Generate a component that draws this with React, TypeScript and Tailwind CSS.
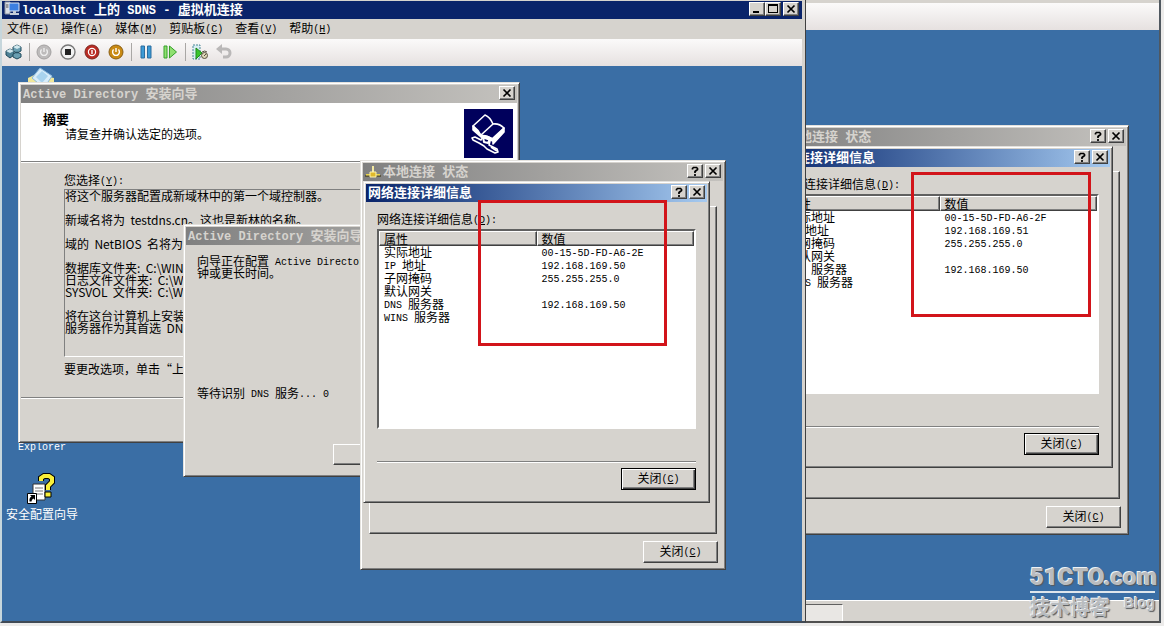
import type { ReactNode } from "react";

const face = "bg-[#d6d3ce] border border-t-[#e4e2de] border-l-[#e4e2de] border-r-[#404040] border-b-[#404040] shadow-[inset_1px_1px_0_#fff,inset_-1px_-1px_0_#808080]";
const raised = "bg-[#d6d3ce] border border-t-white border-l-white border-r-[#404040] border-b-[#404040] shadow-[inset_-1px_-1px_0_#808080]";

// latin runs use the mono font at half the width of a chinese glyph, "&" marks the access key
function T({ children, bold }: { children: string; bold?: boolean }) {
  const parts = children.split(/([\x20-\x7e]+)/);
  const size = bold ? "text-[12px]" : "text-[10px] align-[1px]";
  return (
    <span className="whitespace-pre">
      {parts.map((part, i) =>
        i % 2 === 0 ? (
          part
        ) : (
          <span key={i} className={`font-['Liberation_Mono',monospace] leading-[0] ${size}`}>
            {part.split(/(&.)/).map((s, j) => (s[0] === "&" ? <u key={j}>{s.slice(1)}</u> : s))}
          </span>
        )
      )}
    </span>
  );
}

function CaptionButton({ kind }: { kind: "help" | "close" | "min" | "max" }) {
  return (
    <button aria-label={kind} className={`flex h-3.5 w-4 shrink-0 items-center justify-center ${raised}`}>
      <svg width="10" height="10" viewBox="0 0 10 10" fill="none" stroke="#000">
        {kind === "close" && <path d="M1.500 1.500l7 7M8.500 1.500l-7 7" strokeWidth="1.7" />}
        {kind === "help" && <path d="M2.500 3.500V2.500L3.500 1.500H6.500L7.500 2.500V3.500L5 5.500V7M5 8v2" strokeWidth="1.7" />}
        {kind === "min" && <path d="M1 8h6" strokeWidth="2" />}
        {kind === "max" && (
          <>
            <rect x="0.5" y="0.5" width="9" height="8" />
            <path d="M0 1h10" strokeWidth="2" />
          </>
        )}
      </svg>
    </button>
  );
}

function TitleBar({ title, active, icon, help }: { title: string; active?: boolean; icon?: ReactNode; help?: boolean }) {
  const colors = active
    ? "from-[#0a246a] to-[#a6caf0] text-white"
    : "from-[#808080] to-[#c4c2be] text-[#d6d3ce]";
  return (
    <div className={`flex h-[18px] shrink-0 items-center gap-0.5 bg-linear-to-r px-0.5 pb-0.5 text-[13px] font-bold leading-4 ${colors}`}>
      {icon}
      <h2 className="min-w-0 flex-1">
        <T bold>{title}</T>
      </h2>
      {help && <CaptionButton kind="help" />}
      <CaptionButton kind="close" />
    </div>
  );
}

function CloseButton({ primary }: { primary?: boolean }) {
  const edge = primary
    ? "border border-black bg-[#d6d3ce] shadow-[inset_1px_1px_0_#fff,inset_-1px_-1px_0_#404040,inset_-2px_-2px_0_#808080]"
    : raised;
  return (
    <button className={`h-[22px] w-[75px] pb-0.5 ${edge}`}>
      <T>关闭(&C)</T>
    </button>
  );
}

const NetIcon = () => (
  <svg width="16" height="16" viewBox="0 0 16 16">
    <path d="M7 3h2v6H7z" fill="#f4e9a0" />
    <path d="M0 12h16v2H0z" fill="#5a5540" />
    <path d="M1 11h14v1.500H1z" fill="#e8d44c" />
    <path d="M5 9h6v5H5z" fill="#e0b92a" stroke="#fff4b0" />
  </svg>
);

function StatusWindow({ rows, id }: { rows: string[][]; id: string }) {
  return (
    <section className={`relative flex h-[410px] w-[366px] flex-col p-0.5 ${face}`}>
      <TitleBar title="本地连接 状态" icon={<NetIcon />} help />
      <div className={`mx-1.5 mt-[25px] h-[328px] ${raised}`} />
      <div className="mt-[7px] flex justify-end pr-[5px]">
        <CloseButton />
      </div>

      <section className={`absolute left-0.5 top-5 flex h-[322px] w-[347px] flex-col p-0.5 ${face}`}>
        <TitleBar title="网络连接详细信息" active help />
        <div className="flex flex-1 flex-col px-[11px]">
          <p id={id} className="mt-2 h-[19px] leading-[18px]">
            <T>网络连接详细信息(&D):</T>
          </p>
          <div className="h-[200px] border-2 border-b-white border-l-[#606060] border-r-white border-t-[#606060] bg-white">
            <table aria-labelledby={id} className="w-full table-fixed border-separate border-spacing-0 text-left">
              <thead>
                <tr className="h-[15px] leading-3">
                  <th className={`p-0 pl-1 font-normal ${raised}`}>属性</th>
                  <th className={`p-0 pl-1 font-normal ${raised}`}>数值</th>
                </tr>
              </thead>
              <tbody>
                {rows.map(([name, value]) => (
                  <tr key={name} className="h-[13px] leading-3">
                    <td className="p-0 pb-px pl-[5px] align-top"><T>{name}</T></td>
                    <td className="p-0 pb-px pl-[5px] align-top"><T>{value}</T></td>
                  </tr>
                ))}
              </tbody>
            </table>
          </div>
          <hr className="mt-8 border-t border-[#808080] shadow-[0_1px_0_#fff]" />
          <div className="mt-1.5 flex justify-end">
            <CloseButton primary />
          </div>
        </div>
      </section>
    </section>
  );
}

function SummaryWizard() {
  return (
    <section className={`flex h-[361px] w-[502px] flex-col p-0.5 ${face}`}>
      <TitleBar title="Active Directory 安装向导" />
      <header className="flex h-[59px] shrink-0 justify-between border-b border-[#808080] bg-white pl-[22px] pr-1 shadow-[0_1px_0_#fff]">
        <div className="pt-2">
          <h3 className="text-[13px] font-bold leading-[15px]">摘要</h3>
          <p className="pl-[22px] leading-[15px]">请复查并确认选定的选项。</p>
        </div>
        <svg className="mt-1.5" width="49" height="49" viewBox="0 0 49 49" fill="none" stroke="#fff" strokeWidth="1.6" strokeLinejoin="round">
          <path d="M0 0h49v49H0z" fill="#00005c" stroke="none" />
          <path d="M9 17L21 6q5 2 8 9q6-1 11 4L29 31q-5-5-12-4.500q-3-6-8-9.500z" />
          <path d="M29 15L17 26" />
          <path d="M9 17v4l8 7 12 4v-2q-6-4-12-3.500z" fill="#fff" />
          <path d="M29 29l11-10v4L29 35z" fill="#fff" />
          <path d="M8 29l3-1 6 3 2-3 5 1 2 3-1 4 8 4 1 3-3 1-8-4-3-3-5-3-2-1-4-2z" />
          <path d="M19 28l1 5 4 1 2-4M27 38l6 4" strokeWidth="2" />
        </svg>
      </header>
      <div className="flex flex-col pl-[43px] pr-[18px]">
        <label htmlFor="summary" className="mt-2.5 h-[17px] leading-4">
          <T>您选择(&Y):</T>
        </label>
        <textarea
          id="summary"
          readOnly
          wrap="off"
          className="h-[168px] resize-none overflow-hidden border border-b-white border-l-[#808080] border-r-white border-t-[#808080] bg-[#d6d3ce] p-0 leading-3"
          value={`将这个服务器配置成新域林中的第一个域控制器。

新域名将为  testdns.cn。这也是新林的名称。

域的  NetBIOS  名将为

数据库文件夹:  C:\\WIN
日志文件文件夹:  C:\\W
SYSVOL  文件夹:  C:\\WI

将在这台计算机上安装
服务器作为其首选  DNS`}
        />
        <p className="mt-1 h-4 leading-4">要更改选项，单击“上</p>
      </div>
      <hr className="mt-5 border-t border-[#808080] shadow-[0_1px_0_#fff]" />
    </section>
  );
}

function ProgressWizard() {
  return (
    <section className={`flex h-[253px] w-[366px] flex-col p-0.5 ${face}`}>
      <TitleBar title="Active Directory 安装向导" />
      <div className="flex flex-1 flex-col pl-[11px]">
        <p className="mt-2.5 leading-3">
          <T>向导正在配置 Active Director</T>
          <br />
          钟或更长时间。
        </p>
        <p className="mt-[108px] leading-3">
          <T>等待识别 DNS 服务... 0</T>
        </p>
        <button aria-label="取消" className={`ml-[136px] mt-[45px] h-[21px] w-[75px] ${raised}`} />
      </div>
    </section>
  );
}

const menus = ["文件(&F)", "操作(&A)", "媒体(&M)", "剪贴板(&C)", "查看(&V)", "帮助(&H)"];

function Tool({ label, children }: { label: string; children: ReactNode }) {
  return (
    <button aria-label={label} className="flex h-6 w-6 items-center justify-center">
      <svg width="18" height="18" viewBox="0 0 18 18" fill="none">{children}</svg>
    </button>
  );
}

const Separator = () => <span className="flex w-1.5 justify-center"><span className="h-4.5 w-px bg-[#a9a7a5]" /></span>;

const Power = ({ color }: { color: string }) => (
  <path d="M6.600 6.600a3.400 3.400 0 1 0 4.800 0M9 5v4" stroke={color} strokeWidth="1.4" />
);

function Toolbar() {
  return (
    <div className="flex h-[27px] shrink-0 items-center bg-linear-to-b from-[#fbfafa] to-[#e6e1e0] pb-0.5">
      <Tool label="Ctrl+Alt+Del">
        <path d="M1 8l4-2 4 2v4l-4 3-4-3z" fill="#4f8296" stroke="#204a5c" />
        <path d="M8 4l4-2 4 2v4l-4 2-4-2zM8 11l4-2 4 2v3l-4 2-4-2z" fill="#6a9fb2" stroke="#204a5c" />
        <path d="M1 8l4 2 4-2-4-2zM8 4l4 2 4-2-4-2z" fill="#d2e8ee" />
      </Tool>
      <Separator />
      <Tool label="启动">
        <circle cx="9" cy="9" r="7" fill="#bdbbbb" stroke="#a3a1a1" />
        <Power color="#eee" />
      </Tool>
      <Tool label="关闭">
        <circle cx="9" cy="9" r="7" fill="#f2f2f2" stroke="#777" strokeWidth="1.4" />
        <path d="M6 6h6v6H6z" fill="#222" />
      </Tool>
      <Tool label="关机">
        <circle cx="9" cy="9" r="7" fill="#b92a22" stroke="#7c2720" />
        <circle cx="9" cy="9" r="3.6" stroke="#fff" strokeWidth="1.2" />
        <path d="M9 7v4" stroke="#fff" strokeWidth="1.4" />
      </Tool>
      <Tool label="保存">
        <circle cx="9" cy="9" r="7" fill="#c98a12" stroke="#8a5e14" />
        <Power color="#fff" />
      </Tool>
      <Separator />
      <Tool label="暂停">
        <path d="M4 3h3.500v12H4zM10.500 3H14v12h-3.500z" fill="#3d9bd6" stroke="#2b6d9f" />
      </Tool>
      <Tool label="重置">
        <path d="M3 3h3v12H3zM8.500 3l7 6-7 6z" fill="#8fe070" stroke="#36a02a" />
      </Tool>
      <Separator />
      <Tool label="快照">
        <path d="M2 2h7v14H2z" fill="#d7eef3" stroke="#4b8797" strokeDasharray="2 1" />
        <path d="M5 5l6 5-6 6z" fill="#38c42c" stroke="#208a1c" />
        <circle cx="13.5" cy="12.5" r="3" fill="#ddd6b8" stroke="#55503c" />
        <path d="M11 9q3-2 5 0M13 13l2-2" stroke="#55503c" />
      </Tool>
      <Tool label="还原">
        <path d="M6 6h5a3.800 3.800 0 0 1 0 8H8" stroke="#bab8b8" strokeWidth="3" />
        <path d="M1 6l6-5v10z" fill="#bab8b8" />
      </Tool>
    </div>
  );
}

const localRows = [
  ["实际地址", "00-15-5D-FD-A6-2E"],
  ["IP 地址", "192.168.169.50"],
  ["子网掩码", "255.255.255.0"],
  ["默认网关", ""],
  ["DNS 服务器", "192.168.169.50"],
  ["WINS 服务器", ""],
];

const remoteRows = [
  ["实际地址", "00-15-5D-FD-A6-2F"],
  ["IP 地址", "192.168.169.51"],
  ["子网掩码", "255.255.255.0"],
  ["默认网关", ""],
  ["DNS 服务器", "192.168.169.50"],
  ["WINS 服务器", ""],
];

export default function App() {
  return (
    <div className="flex h-screen min-h-[600px] w-full overflow-hidden bg-[#ecebea] pb-[3px] pr-[3px] font-['Noto_Sans_CJK_SC',sans-serif] text-xs text-black">
      <main className="flex w-[806px] shrink-0 flex-col border-b-2 border-l-2 border-r border-b-[#404a55] border-l-[#c6d6dc] border-r-[#404040] bg-[#d6d3ce] pr-[3px] pt-px">
        <div className="flex h-[18px] shrink-0 items-center bg-[#0a246a] pb-0.5 pl-0.5 pr-[3px] text-[13px] font-bold leading-4 text-white">
          <svg className="mr-0.5" width="16" height="16" viewBox="0 0 16 16">
            <path d="M1 1h5v12H1z" fill="#d8dde4" stroke="#8b93a0" />
            <path d="M2 4h3M2 6h3" stroke="#555" />
            <path d="M5 2h10v8H5z" fill="#3c7fe0" stroke="#dbe4f2" />
            <path d="M9 10h3v2H9zM6 12h9v2H6z" fill="#c4ccd8" />
          </svg>
          <h1 className="flex-1"><T bold>localhost 上的 SDNS - 虚拟机连接</T></h1>
          <CaptionButton kind="min" />
          <CaptionButton kind="max" />
          <span className="w-0.5" />
          <CaptionButton kind="close" />
        </div>
        <nav className="flex h-5 shrink-0 items-center gap-3 pb-0.5 pl-[5px]">
          {menus.map((m) => (
            <button key={m}><T>{m}</T></button>
          ))}
        </nav>
        <Toolbar />

        <div className="relative flex-1 overflow-hidden bg-[#3a6ea5] text-black">
          <svg className="absolute left-6 top-0" width="30" height="24" viewBox="0 0 30 24">
            <path d="M2 12l8-4 18 4v12H2z" fill="#f0e79a" />
            <path d="M6 12L14 2l12 8-8 12z" fill="#d9edfa" stroke="#8ab9dc" />
            <path d="M10 11l6-6 6 5-6 7z" fill="#a9d3ee" />
          </svg>
          <span className="absolute left-4 top-[372px] leading-4 text-white"><T>Explorer</T></span>
          <a href="#wizard" className="absolute left-1 top-[406px] flex flex-col items-center text-white">
            <svg width="30" height="33" viewBox="0 0 30 33">
              <path d="M6 12h12v16H6z" fill="#fff" stroke="#333" />
              <path d="M8 16h8M8 19h8M8 22h8" stroke="#777" />
              <path d="M14 9V6l3-2h5l3 2v4l-4 4v4" fill="none" stroke="#000" strokeWidth="6" />
              <path d="M18 20h6v5h-6z" fill="#f8ef3a" stroke="#000" />
              <path d="M14 9V6l3-2h5l3 2v4l-4 4v4" fill="none" stroke="#f8ef3a" strokeWidth="4" />
              <path d="M.5 21.500h9v10h-9z" fill="#fff" stroke="#000" />
              <path d="M2.500 29.500q-.5-4 2-5l-1.500-1.500h5v5l-1.500-1.500q-2 1-2 3z" fill="#000" />
            </svg>
            <span className="leading-[18px]">安全配置向导</span>
          </a>

          <div className="absolute left-4 top-4"><SummaryWizard /></div>
          <div className="absolute left-[181px] top-[158px]"><ProgressWizard /></div>
          <div className="absolute left-[358px] top-[94px]"><StatusWindow rows={localRows} id="local" /></div>
          <div className="absolute left-[476px] top-[134px] h-[146px] w-[189px] border-3 border-[#d2141a]" />
        </div>
      </main>

      <aside className="flex min-w-0 flex-1 flex-col border-b-2 border-r-2 border-b-[#505050] border-r-[#505860] bg-[#d6d3ce]">
        <div className="mt-[3px] h-[27px] shrink-0 bg-linear-to-b from-[#fbfafa] to-[#e6e1e0]" />
        <div className="relative flex-1 overflow-hidden bg-[#3a6ea5]">
          <div className="absolute left-[-43px] top-[95px]"><StatusWindow rows={remoteRows} id="remote" /></div>
          <div className="absolute left-[105px] top-[142px] h-[145px] w-[180px] border-3 border-[#d2141a]" />
        </div>
        <div className="relative h-[21px] shrink-0 border-t border-white">
          <div className="mt-[3px] h-[17px] w-[37px] border border-b-0 border-l-0 border-r-white border-t-[#606060] bg-[#e9e7e4]" />
          <div className="absolute bottom-0 right-1 w-[125px] font-bold text-[#b9bcbf] [text-shadow:-1px_-1px_0_#eef2f5,1px_1px_1px_#55595e]">
            <p className="border-b-2 border-[#dfe6ec] font-['Liberation_Sans_Narrow','Roboto',sans-serif] text-[24px] font-black leading-7">51CTO.com</p>
            <div className="flex justify-between">
              <span className="text-[20px] leading-7">技术博客</span>
              <span className="font-['Liberation_Sans',sans-serif] text-[14px] leading-5">Blog</span>
            </div>
          </div>
        </div>
      </aside>
    </div>
  );
}
